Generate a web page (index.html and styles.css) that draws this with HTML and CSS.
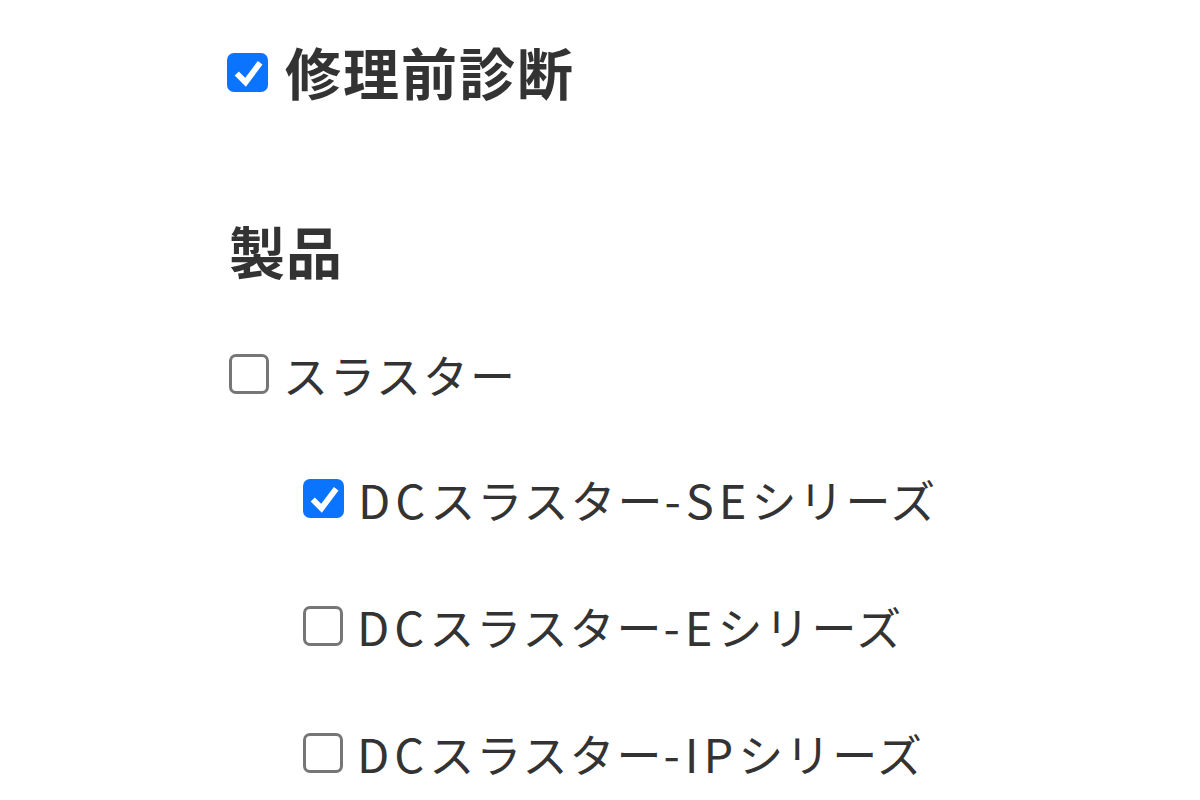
FILE: index.html
```html
<!DOCTYPE html>
<html>
	<head>
		<meta charset="UTF-8">
		<title>修理前診断</title>
		<link rel="stylesheet" href="styles.css">
	</head>
	<body>
		<div class="form-wrap">
			<label class="title-row">
				<span class="check is-checked">
					<svg viewBox="0 0 40 40" width="40" height="40"><path d="M9 21 L18 30 L33 10" fill="none" stroke="#fff" stroke-width="6" stroke-linecap="butt" stroke-linejoin="miter"/></svg>
				</span>
				<span class="title-text">修理前診断</span>
			</label>

			<div class="section-title">製品</div>

			<ul class="item-list">
				<li class="item">
					<span class="check"></span>
					<span class="item-text">スラスター</span>
				</li>
				<li class="item sub">
					<span class="check is-checked">
						<svg viewBox="0 0 40 40" width="40" height="40"><path d="M9 21 L18 30 L33 10" fill="none" stroke="#fff" stroke-width="6" stroke-linecap="butt" stroke-linejoin="miter"/></svg>
					</span>
					<span class="item-text"><span class="latin">DC</span>スラスター<span class="latin">-SE</span>シリーズ</span>
				</li>
				<li class="item sub">
					<span class="check"></span>
					<span class="item-text"><span class="latin">DC</span>スラスター<span class="latin">-E</span>シリーズ</span>
				</li>
				<li class="item sub">
					<span class="check"></span>
					<span class="item-text"><span class="latin">DC</span>スラスター<span class="latin">-IP</span>シリーズ</span>
				</li>
			</ul>
		</div>
	</body>
</html>
```

FILE: styles.css
```css
body {
	margin: 0;
	background-color: #fff;
	color: #333;
	font-family: "Noto Sans CJK JP", "Noto Sans", sans-serif;
}

.form-wrap {
	padding: 41px 0 0 227px;
}

.title-row {
	display: flex;
	align-items: center;
	gap: 17px;
	height: 62px;
}

.title-text {
	font-size: 56px;
	font-weight: bold;
	line-height: 1;
	letter-spacing: 2px;
	margin-top: -3px;
}

.section-title {
	margin-top: 119px;
	font-size: 56px;
	font-weight: bold;
	line-height: 1;
	padding-left: 2px;
	letter-spacing: 1px;
}

.item-list {
	list-style: none;
	margin: 65px 0 0 0;
	padding: 0;
}

.item {
	display: flex;
	align-items: center;
	gap: 14px;
	height: 127px;
	font-size: 45px;
	letter-spacing: 2px;
}

.item:first-child {
	height: 62px;
	margin-bottom: 30px;
	padding-left: 2px;
}

.item.sub {
	padding-left: 76px;
}

/* 英数字は少し広めに */
.item-text .latin {
	font-size: 47px;
	letter-spacing: 5px;
}

.check {
	box-sizing: border-box;
	width: 40px;
	height: 40px;
	border: 3px solid #767676;
	border-radius: 7px;
	background-color: #fff;
	flex-shrink: 0;
	display: flex;
}

.check.is-checked {
	border: none;
	background-color: #0b74ff;
	width: 41px;
	height: 39px;
}

.check svg {
	width: 100%;
	height: 100%;
}
```
